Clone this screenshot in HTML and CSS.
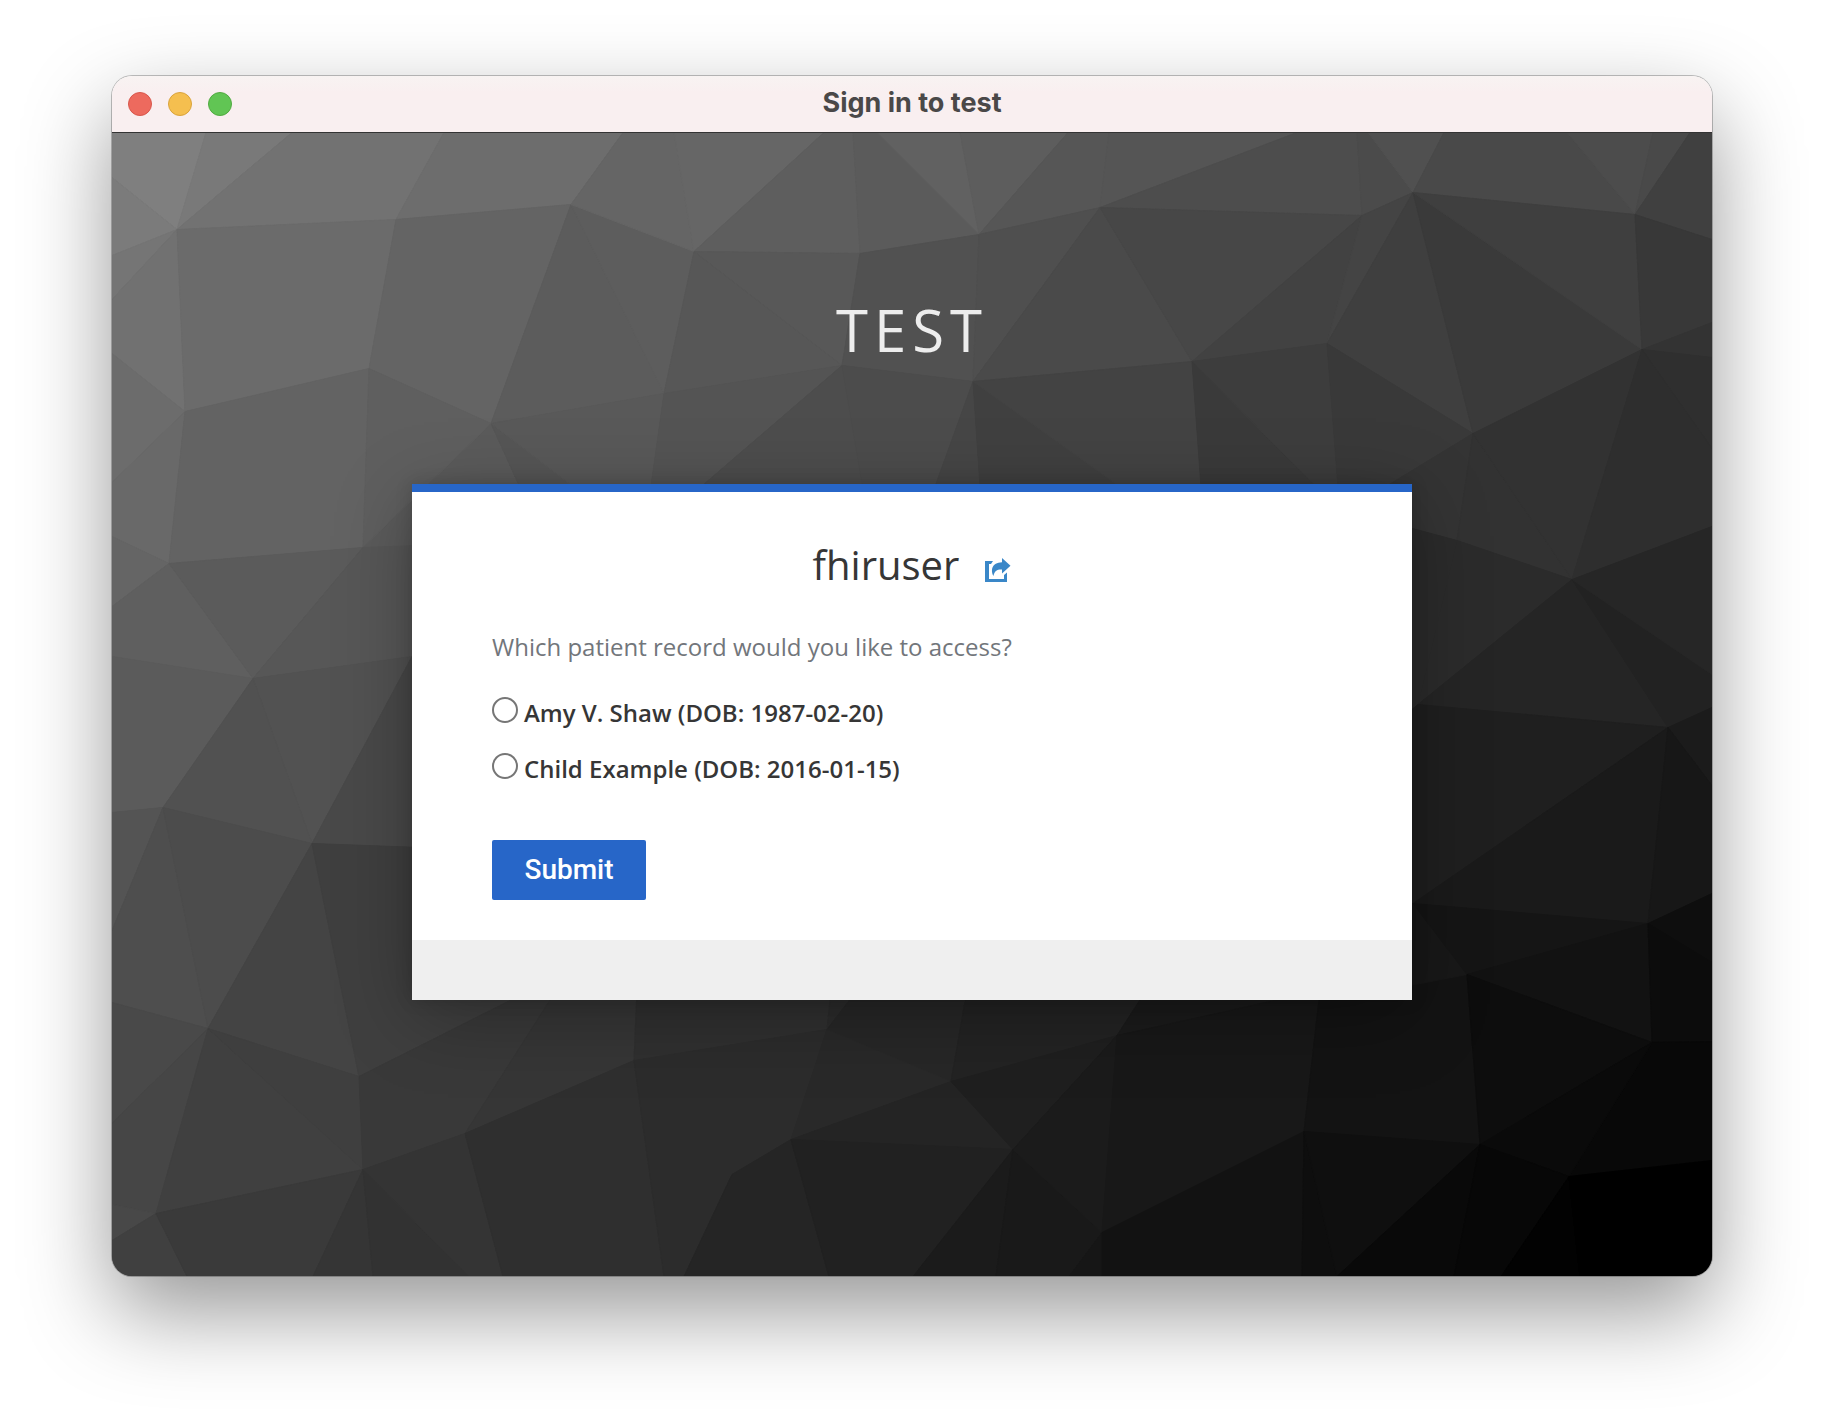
FILE: index.html
```html
<!DOCTYPE html>
<html lang="en">
<head>
<meta charset="utf-8">
<meta name="viewport" content="width=device-width, initial-scale=1">
<title>Sign in to test</title>
<link rel="stylesheet" href="styles.css">
</head>
<body>
<div class="window">
  <header class="titlebar">
    <div class="lights">
      <span class="light light-close"></span>
      <span class="light light-minimize"></span>
      <span class="light light-zoom"></span>
    </div>
    <div class="titlebar-text">Sign in to test</div>
  </header>
  <main class="page">
    <svg class="backdrop" viewBox="112 132 1600 1144" preserveAspectRatio="xMidYMid slice" aria-hidden="true">
      <!-- upper left -->
      <polygon color="#7f7f7f" points="112,132 206,132 177,229 112,177"/>
      <polygon color="#797979" points="206,132 292,132 177,229"/>
      <polygon color="#727272" points="292,132 444,132 396,219 177,229"/>
      <polygon color="#6d6d6d" points="444,132 623,132 571,204 396,219"/>
      <polygon color="#7b7b7b" points="112,177 177,229 112,255"/>
      <polygon color="#757575" points="112,255 177,229 112,299"/>
      <polygon color="#717171" points="112,299 177,229 185,411 112,353"/>
      <polygon color="#6c6c6c" points="112,353 185,411 112,482"/>
      <polygon color="#6b6b6b" points="177,229 396,219 369,368 185,411"/>
      <polygon color="#646464" points="396,219 571,204 491,423 369,368"/>
      <polygon color="#5c5c5c" points="571,204 664,393 491,423"/>
      <polygon color="#5d5d5d" points="571,204 694,251 664,393"/>
      <polygon color="#656565" points="623,132 674,132 694,251 571,204"/>
      <!-- upper middle -->
      <polygon color="#666666" points="674,132 824,132 694,251"/>
      <polygon color="#5e5e5e" points="824,132 853,132 860,253 694,251"/>
      <polygon color="#5b5b5b" points="853,132 877,132 979,234 860,253"/>
      <polygon color="#616161" points="877,132 960,132 979,234"/>
      <polygon color="#5d5d5d" points="960,132 1068,132 979,234"/>
      <polygon color="#565656" points="1068,132 1109,132 1100,207 979,234"/>
      <polygon color="#585858" points="694,251 860,253 842,365"/>
      <polygon color="#575757" points="694,251 842,365 664,393"/>
      <polygon color="#515151" points="860,253 979,234 973,381 842,365"/>
      <polygon color="#4f4f4f" points="979,234 1100,207 973,381"/>
      <polygon color="#4a4a4a" points="1100,207 1192,361 973,381"/>
      <polygon color="#5b5b5b" points="491,423 526,500 526,560 412,560 363,547"/>
      <polygon color="#565656" points="491,423 526,500 591,500"/>
      <polygon color="#595959" points="491,423 664,393 649,500 591,500"/>
      <polygon color="#545454" points="664,393 842,365 685,500 649,500"/>
      <polygon color="#4d4d4d" points="842,365 865,500 685,500"/>
      <polygon color="#4c4c4c" points="842,365 973,381 930,500 865,500"/>
      <polygon color="#464646" points="973,381 981,500 930,500"/>
      <polygon color="#404040" points="973,381 1139,500 981,500"/>
      <polygon color="#434343" points="973,381 1192,361 1202,500 1139,500"/>
      <!-- upper right -->
      <polygon color="#555555" points="1109,132 1297,132 1100,207"/>
      <polygon color="#4d4d4d" points="1297,132 1357,132 1362,215 1100,207"/>
      <polygon color="#4b4b4b" points="1357,132 1368,132 1413,192 1362,215"/>
      <polygon color="#505050" points="1368,132 1444,132 1413,192"/>
      <polygon color="#494949" points="1444,132 1567,132 1635,214 1413,192"/>
      <polygon color="#4c4c4c" points="1567,132 1653,132 1635,214"/>
      <polygon color="#494949" points="1653,132 1690,132 1635,214"/>
      <polygon color="#404040" points="1690,132 1712,132 1712,239 1635,214"/>
      <polygon color="#474747" points="1100,207 1362,215 1192,361"/>
      <polygon color="#424242" points="1362,215 1327,343 1192,361"/>
      <polygon color="#444444" points="1362,215 1413,192 1327,343"/>
      <polygon color="#3f3f3f" points="1413,192 1473,433 1327,343"/>
      <polygon color="#3a3a3a" points="1413,192 1642,349 1473,433"/>
      <polygon color="#3f3f3f" points="1413,192 1635,214 1642,349"/>
      <polygon color="#383838" points="1635,214 1712,239 1712,322 1642,349"/>
      <polygon color="#333333" points="1642,349 1712,322 1712,357"/>
      <polygon color="#2f2f2f" points="1642,349 1712,357 1712,448"/>
      <polygon color="#3a3a3a" points="1192,361 1330,500 1202,500"/>
      <polygon color="#3d3d3d" points="1192,361 1327,343 1339,500 1330,500"/>
      <polygon color="#393939" points="1327,343 1473,433 1363,500 1339,500"/>
      <polygon color="#343434" points="1473,433 1457,540 1405,526 1363,500"/>
      <polygon color="#323232" points="1473,433 1572,579 1457,540"/>
      <polygon color="#323232" points="1473,433 1642,349 1572,579"/>
      <polygon color="#2e2e2e" points="1642,349 1712,448 1712,526 1572,579"/>
      <!-- left -->
      <polygon color="#696969" points="185,411 169,563 112,536 112,482"/>
      <polygon color="#656565" points="112,536 169,563 112,606"/>
      <polygon color="#636363" points="369,368 363,547 169,563 185,411"/>
      <polygon color="#5f5f5f" points="369,368 491,423 363,547"/>
      <polygon color="#5f5f5f" points="169,563 253,678 112,656 112,606"/>
      <polygon color="#5b5b5b" points="169,563 363,547 253,678"/>
      <polygon color="#575757" points="363,547 420,545 420,655 253,678"/>
      <polygon color="#5b5b5b" points="112,656 253,678 163,807 112,812"/>
      <polygon color="#525252" points="253,678 412,656 312,843"/>
      <polygon color="#515151" points="253,678 312,843 163,807"/>
      <polygon color="#494949" points="412,656 420,656 420,847 312,843"/>
      <!-- right -->
      <polygon color="#2b2b2b" points="1457,540 1572,579 1418,704"/>
      <polygon color="#2b2b2b" points="1405,526 1457,540 1418,704 1405,715"/>
      <polygon color="#252525" points="1572,579 1668,727 1418,704"/>
      <polygon color="#222222" points="1572,579 1712,674 1712,707 1668,727"/>
      <polygon color="#262626" points="1572,579 1712,526 1712,674"/>
      <polygon color="#1b1b1b" points="1668,727 1712,707 1712,785"/>
      <polygon color="#1f1f1f" points="1418,704 1668,727 1413,903 1405,903 1405,715"/>
      <polygon color="#1a1a1a" points="1668,727 1648,923 1413,903"/>
      <polygon color="#171717" points="1668,727 1712,785 1712,893 1648,923"/>
      <!-- lower left -->
      <polygon color="#545454" points="112,812 163,807 112,930"/>
      <polygon color="#4e4e4e" points="163,807 208,1028 112,1002 112,930"/>
      <polygon color="#4c4c4c" points="163,807 312,843 208,1028"/>
      <polygon color="#444444" points="312,843 359,1076 208,1028"/>
      <polygon color="#3f3f3f" points="312,843 420,847 420,990 530,990 359,1076"/>
      <polygon color="#494949" points="112,1002 208,1028 112,1123"/>
      <polygon color="#464646" points="112,1123 208,1028 156,1213 112,1204"/>
      <polygon color="#484848" points="112,1204 156,1213 112,1240"/>
      <polygon color="#404040" points="208,1028 363,1169 156,1213"/>
      <polygon color="#3f3f3f" points="208,1028 359,1076 363,1169"/>
      <polygon color="#393939" points="359,1076 530,990 556,990 465,1133 363,1169"/>
      <polygon color="#363636" points="556,990 637,990 634,1060 465,1133"/>
      <polygon color="#404040" points="112,1240 156,1213 187,1276 112,1276"/>
      <polygon color="#3a3a3a" points="156,1213 363,1169 313,1276 187,1276"/>
      <polygon color="#353535" points="363,1169 373,1276 313,1276"/>
      <polygon color="#323232" points="363,1169 469,1276 373,1276"/>
      <polygon color="#343434" points="363,1169 465,1133 503,1276 469,1276"/>
      <polygon color="#2f2f2f" points="465,1133 634,1060 664,1276 503,1276"/>
      <!-- lower middle -->
      <polygon color="#303030" points="637,990 831,990 827,1029 634,1060"/>
      <polygon color="#2c2c2c" points="831,990 857,990 827,1029"/>
      <polygon color="#2c2c2c" points="634,1060 827,1029 791,1139 732,1174 684,1276 664,1276"/>
      <polygon color="#272727" points="857,990 967,990 951,1081 827,1029"/>
      <polygon color="#292929" points="827,1029 951,1081 791,1139"/>
      <polygon color="#232323" points="967,990 1146,990 1117,1035 951,1081"/>
      <polygon color="#242424" points="791,1139 951,1081 1013,1149"/>
      <polygon color="#1f1f1f" points="951,1081 1117,1035 1013,1149"/>
      <polygon color="#252525" points="791,1139 829,1276 684,1276 732,1174"/>
      <polygon color="#212121" points="791,1139 1013,1149 913,1276 829,1276"/>
      <polygon color="#1b1b1b" points="1013,1149 996,1276 913,1276"/>
      <polygon color="#191919" points="1013,1149 1102,1232 1069,1276 996,1276"/>
      <polygon color="#161616" points="1102,1232 1102,1276 1069,1276"/>
      <polygon color="#1b1b1b" points="1013,1149 1117,1035 1102,1232"/>
      <polygon color="#1b1b1b" points="1117,1035 1146,990 1340,990"/>
      <!-- lower right -->
      <polygon color="#181818" points="1117,1035 1320,990 1304,1131 1102,1232"/>
      <polygon color="#121212" points="1102,1232 1304,1131 1302,1276 1102,1276"/>
      <polygon color="#0e0e0e" points="1304,1131 1337,1276 1302,1276"/>
      <polygon color="#131313" points="1320,990 1405,985 1467,974 1480,1144 1304,1131"/>
      <polygon color="#0f0f0f" points="1304,1131 1480,1144 1337,1276"/>
      <polygon color="#181818" points="1405,903 1413,903 1467,974 1405,986"/>
      <polygon color="#151515" points="1413,903 1648,923 1467,974"/>
      <polygon color="#121212" points="1467,974 1648,923 1652,1042"/>
      <polygon color="#0d0d0d" points="1467,974 1652,1042 1480,1144"/>
      <polygon color="#0e0e0e" points="1648,923 1712,893 1712,962"/>
      <polygon color="#0c0c0c" points="1648,923 1712,962 1712,1041 1652,1042"/>
      <polygon color="#080808" points="1652,1042 1712,1041 1712,1160 1569,1176"/>
      <polygon color="#0a0a0a" points="1652,1042 1569,1176 1480,1144"/>
      <polygon color="#090909" points="1480,1144 1454,1276 1337,1276"/>
      <polygon color="#070707" points="1480,1144 1569,1176 1501,1276 1454,1276"/>
      <polygon color="#020202" points="1569,1176 1580,1276 1501,1276"/>
      <polygon color="#000000" points="1569,1176 1712,1160 1712,1276 1580,1276"/>
    </svg>
    <h1 class="realm">TEST</h1>
    <section class="card">
      <div class="card-body">
        <div class="user">
          <h2 class="user-name">fhiruser</h2>
          <a class="user-reset" href="#" aria-label="Restart login">
            <svg class="user-icon" viewBox="0 0 26 24" aria-hidden="true">
              <path d="M0 3H8L6 6H4V21H19V17L22 14.500V24H0Z"/>
              <path d="M17 0L25.500 7.800L17 15.500V11.500C12 11.300 9.500 12.800 8.500 18C5.500 13 6.500 4.500 17 4.300Z"/>
            </svg>
          </a>
        </div>
        <form>
          <fieldset class="choices">
            <legend class="question">Which patient record would you like to access?</legend>
            <div class="choice">
              <input class="radio" type="radio" name="patient" id="patient-amy">
              <label for="patient-amy">Amy V. Shaw (DOB: 1987-02-20)</label>
            </div>
            <div class="choice">
              <input class="radio" type="radio" name="patient" id="patient-child">
              <label for="patient-child">Child Example (DOB: 2016-01-15)</label>
            </div>
          </fieldset>
          <button class="submit" type="submit">Submit</button>
        </form>
      </div>
      <div class="card-footer"></div>
    </section>
  </main>
</div>
</body>
</html>
```
FILE: styles.css
```css
* {
  box-sizing: border-box;
}

body {
  margin: 0;
  padding: 76px 112px 148px;
  min-height: 100vh;
  display: flex;
  background: #fff;
  color: #363636;
  font-family: "Open Sans", "Noto Sans", sans-serif;
  font-size: 24px;
  line-height: 32px;
}

.window {
  flex: 1;
  min-width: 0;
  display: flex;
  flex-direction: column;
  border-radius: 20px;
  overflow: hidden;
  box-shadow: 0 0 0 1px rgba(0, 0, 0, 0.24), 0 36px 88px rgba(0, 0, 0, 0.41);
}

.titlebar {
  display: grid;
  grid-template-columns: 1fr auto 1fr;
  align-items: center;
  height: 57px;
  padding: 0 16px;
  border-bottom: 1px solid #333;
  background: linear-gradient(#f8f3f2, #f9eff0 16px);
}

.lights {
  display: flex;
  gap: 16px;
}

.light {
  width: 24px;
  height: 24px;
  border: 1px solid;
  border-radius: 50%;
}

.light-close {
  background: #ed6a5e;
  border-color: #d8574c;
}

.light-minimize {
  background: #f5bf4f;
  border-color: #d9a33c;
}

.light-zoom {
  background: #61c554;
  border-color: #51aa41;
}

.titlebar-text {
  padding-bottom: 2px;
  color: #4a4848;
  font-family: Inter, "Liberation Sans", sans-serif;
  font-size: 27px;
  font-weight: 700;
}

.page {
  position: relative;
  flex: 1;
  display: flex;
  flex-direction: column;
  align-items: center;
  padding: 165px 32px 32px;
  background: #333;
}

.backdrop {
  position: absolute;
  inset: 0;
  width: 100%;
  height: 100%;
}

.backdrop polygon {
  fill: currentColor;
  stroke: currentColor;
  stroke-width: 1;
}

.realm {
  position: relative;
  margin: 0 0 122px;
  color: #ededed;
  font-size: 58px;
  font-weight: 400;
  line-height: 64px;
  letter-spacing: 6px;
}

.card {
  position: relative;
  width: 100%;
  max-width: 1000px;
  border-top: 8px solid #2766c8;
  background: #fff;
  box-shadow: 0 0 16px rgba(3, 3, 3, 0.16), 0 16px 72px rgba(3, 3, 3, 0.28);
}

.card-body {
  padding: 49px 80px 40px;
}

.card-footer {
  height: 60px;
  background: #efefef;
}

.user {
  display: flex;
  justify-content: center;
  align-items: flex-end;
  gap: 26px;
  margin-bottom: 42px;
}

.user-name {
  margin: 0;
  font-size: 40px;
  font-weight: 400;
  line-height: 48px;
}

.user-reset {
  padding-bottom: 7px;
  color: #3a87c8;
}

.user-icon {
  display: block;
  width: 26px;
  height: 24px;
  fill: currentColor;
}

.choices {
  display: block;
  margin: 0 0 55px;
  padding: 0;
  border: 0;
}

.question {
  padding: 0;
  margin-bottom: 34px;
  color: #72767b;
}

.choice {
  display: flex;
  align-items: flex-start;
  gap: 6px;
  font-weight: 600;
}

.choice + .choice {
  margin-top: 24px;
}

.radio {
  appearance: none;
  width: 26px;
  height: 26px;
  margin: 0;
  border: 2px solid #767676;
  border-radius: 50%;
  background: #fff;
}

.submit {
  display: block;
  min-width: 154px;
  height: 60px;
  padding: 0 32px;
  border: 0;
  border-radius: 2px;
  background: #2766c8;
  color: #fff;
  font-family: Roboto, sans-serif;
  font-size: 28px;
  font-weight: 500;
  line-height: 32px;
}
```
